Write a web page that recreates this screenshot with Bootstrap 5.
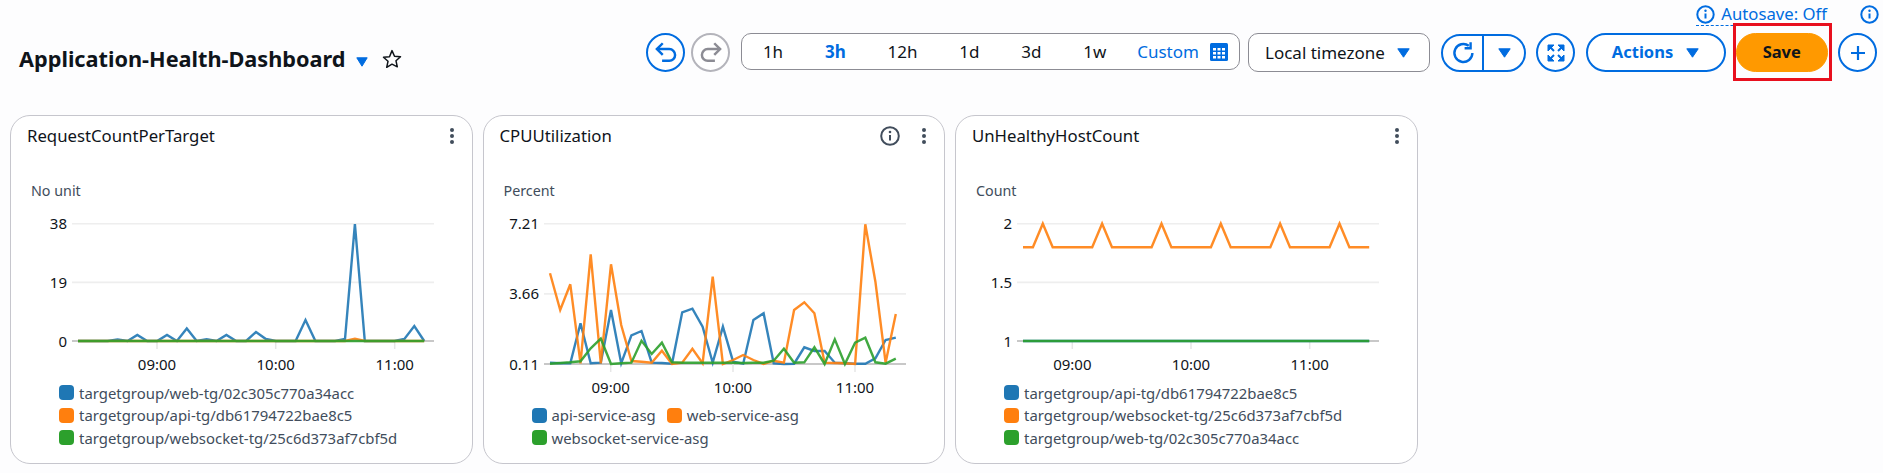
<!DOCTYPE html>
<html lang="en">
<head>
  <meta charset="UTF-8">
  <title>Application-Health-Dashboard</title>
  <meta name="viewport" content="width=device-width, initial-scale=1">
  <link href="https://cdn.jsdelivr.net/npm/bootstrap@5.3.2/dist/css/bootstrap.min.css" rel="stylesheet">
  <style>
    body {
      background-color: #fdfdfe;
      color: #0f141a;
      font-family: "Noto Sans", sans-serif;
      font-size: 14px;
    }
    .autosave-row { height: 33px; padding: 5px 4px 10px 0; }
    .autosave-link {
      color: #006ce0;
      font-size: 16.7px;
      line-height: 18px;
      gap: 6px;
      border-bottom: 1px dashed #006ce0;
      height: 21px;
      margin-right: 33px;
    }
    .toolbar-row { height: 39px; padding: 0 6px 0 19px; margin-bottom: 43px; }
    .dash-title { font-size: 21.7px; font-weight: 700; margin: 13px 0 0; line-height: 28px; }
    .title-tools { margin: 12px auto 0 0; gap: 14px; padding-left: 10px; }
    .title-caret { margin-top: 7px; }
    .undo-btn { margin-right: 6px; }
    .round-btn, .pill-btn {
      --bs-btn-color: #006ce0;
      --bs-btn-border-color: #006ce0;
      --bs-btn-hover-color: #006ce0;
      --bs-btn-hover-border-color: #006ce0;
      --bs-btn-hover-bg: #f0f6ff;
      --bs-btn-border-width: 2px;
      --bs-btn-padding-x: 0;
      --bs-btn-padding-y: 0;
      height: 39px;
      background: #fff;
      display: flex;
      align-items: center;
      justify-content: center;
    }
    .round-btn { width: 39px; border-radius: 50%; }
    .round-btn.is-off { --bs-btn-border-color: #b4b4bb; --bs-btn-color: #8c8c94; }
    .pill-btn { border-radius: 20px; font-weight: 700; font-size: 16.5px; gap: 13px; }
    .actions-btn { width: 140px; margin-left: 10.5px; }
    .range-box {
      height: 37px;
      width: 499px;
      border: 1px solid #8c8c94;
      border-radius: 10px;
      background: #fff;
      margin: 0 8px 2px 11px;
      font-size: 17px;
    }
    .range-item { padding: 0 20.9px; }
    .range-item.is-on { color: #006ce0; font-weight: 700; }
    .range-custom { color: #006ce0; padding-left: 10px; gap: 11px; }
    .tz-select {
      height: 39px;
      width: 182px;
      border: 1px solid #8c8c94;
      border-radius: 10px;
      background: #fff;
      font-size: 17px;
      padding: 0 19px 0 16px;
      margin-right: 11px;
    }
    .refresh-group { width: 85px; height: 38px; border: 2px solid #006ce0; border-radius: 20px; background: #fff; margin-right: 10px; }
    .refresh-main { width: 41px; border-right: 2px solid #006ce0; padding-left: 3px; }
    .save-wrap { margin: 0 10.5px; }
    .save-btn {
      --bs-btn-bg: #ff9900;
      --bs-btn-hover-bg: #ff9900;
      --bs-btn-color: #0f141a;
      --bs-btn-hover-color: #0f141a;
      --bs-btn-border-color: #ff9900;
      --bs-btn-hover-border-color: #ff9900;
      --bs-btn-padding-y: 0;
      width: 91.5px;
      height: 39px;
      border-radius: 20px;
      font-size: 16.5px;
      font-weight: 700;
    }
    .save-mark { top: -10px; bottom: -9px; left: -3px; right: -4px; border: 3px solid #e8101e; pointer-events: none; }
    .panel-list { padding-left: 10px; gap: 10px; }
    .panel {
      width: 462.5px;
      height: 349px;
      border: 1px solid #c6c6cd;
      border-radius: 20px;
      background: #fff;
    }
    .panel-head { height: 40px; padding: 0 17px 0 16px; font-size: 16.75px; }
    .panel-tools { gap: 21px; }
    .panel-unit { color: #414d5c; margin: 25px 0 4px 20px; line-height: 20px; font-size: 14.3px; }
    .panel-chart { display: block; }
    .chart-text { font-family: "Noto Sans", sans-serif; font-size: 15px; fill: #0f141a; }
    .legend-list { margin: auto 0 14px 48px; color: #414d5c; font-size: 14.9px; line-height: 22.5px; column-gap: 11px; }
    .legend-item { gap: 5px; }
    .legend-dot { width: 15px; height: 15px; border-radius: 4px; }
    .dot-blue { background: #1f77b4; }
    .dot-orange { background: #ff7f0e; }
    .dot-green { background: #2ca02c; }
  </style>
</head>
<body>

<!-- top bar -->
<div class="d-flex justify-content-end align-items-start autosave-row">
  <div class="d-flex autosave-link">
    <svg width="19" height="19" viewBox="0 0 19 19"><circle cx="9.5" cy="9.5" r="8.2" fill="none" stroke="#006ce0" stroke-width="2"/><path d="M9.5 8.5v5" stroke="#006ce0" stroke-width="2"/><circle cx="9.5" cy="5.7" r="1.2" fill="#006ce0"/></svg>
    <span>Autosave: Off</span>
  </div>
  <svg width="19" height="19" viewBox="0 0 19 19"><circle cx="9.5" cy="9.5" r="8.2" fill="none" stroke="#006ce0" stroke-width="2"/><path d="M9.5 8.5v5" stroke="#006ce0" stroke-width="2"/><circle cx="9.5" cy="5.7" r="1.2" fill="#006ce0"/></svg>
</div>

<div class="d-flex align-items-center toolbar-row">
  <h1 class="dash-title">Application-Health-Dashboard</h1>
  <div class="d-flex align-items-center title-tools">
    <svg class="title-caret" width="12" height="10" viewBox="0 0 12 10"><path d="M.8.8h10.4L6 9.2z" fill="#006ce0" stroke="#006ce0" stroke-linejoin="round"/></svg>
    <svg width="20" height="20" viewBox="0 0 20 20"><path d="M10 1.6l2.5 5.6 6 .6-4.5 4 1.3 6L10 15.2 4.7 18.3l1.3-6-4.5-4 6-.6z" fill="none" stroke="#0f141a" stroke-width="1.5" stroke-linejoin="round"/></svg>
  </div>

  <button class="btn round-btn undo-btn" type="button" aria-label="Undo">
    <svg width="26" height="26" viewBox="0 0 20 20" fill="none" stroke="currentColor" stroke-width="1.9"><path d="M7.5 2.5L3 7l4.5 4.5"/><path d="M3 7h9.5a4.5 4.5 0 0 1 0 9H7"/></svg>
  </button>
  <button class="btn round-btn is-off" type="button" aria-label="Redo">
    <svg width="26" height="26" viewBox="0 0 20 20" fill="none" stroke="currentColor" stroke-width="1.9"><path d="M12.5 2.5L17 7l-4.5 4.5"/><path d="M17 7H7.5a4.5 4.5 0 0 0 0 9H13"/></svg>
  </button>

  <div class="d-flex align-items-center range-box">
    <span class="range-item">1h</span>
    <span class="range-item is-on">3h</span>
    <span class="range-item">12h</span>
    <span class="range-item">1d</span>
    <span class="range-item">3d</span>
    <span class="range-item">1w</span>
    <span class="d-flex align-items-center range-custom">Custom
      <svg width="18" height="18" viewBox="0 0 18 18"><rect width="18" height="18" rx="1.5" fill="#006ce0"/><g fill="#fff"><rect x="3" y="5" width="3" height="2.5"/><rect x="7.5" y="5" width="3" height="2.5"/><rect x="12" y="5" width="3" height="2.5"/><rect x="3" y="9" width="3" height="2.5"/><rect x="7.5" y="9" width="3" height="2.5"/><rect x="12" y="9" width="3" height="2.5"/><rect x="3" y="13" width="3" height="2.5"/><rect x="7.5" y="13" width="3" height="2.5"/><rect x="12" y="13" width="3" height="2.5"/></g></svg>
    </span>
  </div>

  <div class="d-flex align-items-center justify-content-between tz-select">
    <span>Local timezone</span>
    <svg width="13" height="10" viewBox="0 0 13 10"><path d="M.8.8h11.4L6.5 9.2z" fill="#006ce0" stroke="#006ce0" stroke-linejoin="round"/></svg>
  </div>

  <div class="d-flex refresh-group">
    <div class="d-flex align-items-center justify-content-center refresh-main">
      <svg width="24" height="24" viewBox="0 0 20 20" fill="none" stroke="#006ce0" stroke-width="2"><path d="M17 10a7.5 7.5 0 1 1-3-6"/><path d="M15.5 1v5h-5"/></svg>
    </div>
    <div class="d-flex align-items-center justify-content-center flex-grow-1">
      <svg width="13" height="10" viewBox="0 0 13 10"><path d="M.8.8h11.4L6.5 9.2z" fill="#006ce0" stroke="#006ce0" stroke-linejoin="round"/></svg>
    </div>
  </div>

  <button class="btn round-btn" type="button" aria-label="Full screen">
    <svg width="18" height="18" viewBox="0 0 18 18" fill="none" stroke="#006ce0"><path d="M1 1h6l-6 6zM17 1h-6l6 6zM1 17h6l-6-6zM17 17h-6l6-6z" fill="#006ce0" stroke-width="1"/><path d="M2 2l5 5M16 2l-5 5M2 16l5-5M16 16l-5-5" stroke-width="2"/></svg>
  </button>

  <button class="btn pill-btn actions-btn" type="button">
    Actions
    <svg width="13" height="10" viewBox="0 0 13 10"><path d="M.8.8h11.4L6.5 9.2z" fill="#006ce0" stroke="#006ce0" stroke-linejoin="round"/></svg>
  </button>

  <div class="position-relative save-wrap">
    <button class="btn save-btn" type="button">Save</button>
    <div class="position-absolute save-mark"></div>
  </div>

  <button class="btn round-btn" type="button" aria-label="Add widget">
    <svg width="18" height="18" viewBox="0 0 18 18" stroke="#006ce0" stroke-width="2.2"><path d="M9 2v14M2 9h14"/></svg>
  </button>
</div>

<!-- widgets -->
<div class="d-flex panel-list">
  <div class="d-flex flex-column panel">
    <div class="d-flex align-items-center justify-content-between panel-head">
      <span>RequestCountPerTarget</span>
      <svg width="6" height="18" viewBox="0 0 6 18" fill="#414d5c"><circle cx="3" cy="3" r="2"/><circle cx="3" cy="9" r="2"/><circle cx="3" cy="15" r="2"/></svg>
    </div>
    <div class="panel-unit">No unit</div>
    <svg class="panel-chart" id="chart-requests" width="461" height="170"></svg>
    <ul class="list-unstyled d-flex flex-column legend-list">
      <li class="d-flex align-items-center legend-item"><span class="legend-dot dot-blue"></span>targetgroup/web-tg/02c305c770a34acc</li>
      <li class="d-flex align-items-center legend-item"><span class="legend-dot dot-orange"></span>targetgroup/api-tg/db61794722bae8c5</li>
      <li class="d-flex align-items-center legend-item"><span class="legend-dot dot-green"></span>targetgroup/websocket-tg/25c6d373af7cbf5d</li>
    </ul>
  </div>

  <div class="d-flex flex-column panel">
    <div class="d-flex align-items-center justify-content-between panel-head">
      <span>CPUUtilization</span>
      <div class="d-flex align-items-center panel-tools">
        <svg width="20" height="20" viewBox="0 0 20 20"><circle cx="10" cy="10" r="8.8" fill="none" stroke="#414d5c" stroke-width="2"/><path d="M10 9v5.5" stroke="#414d5c" stroke-width="2"/><circle cx="10" cy="6" r="1.3" fill="#414d5c"/></svg>
        <svg width="6" height="18" viewBox="0 0 6 18" fill="#414d5c"><circle cx="3" cy="3" r="2"/><circle cx="3" cy="9" r="2"/><circle cx="3" cy="15" r="2"/></svg>
      </div>
    </div>
    <div class="panel-unit">Percent</div>
    <svg class="panel-chart" id="chart-cpu" width="461" height="192"></svg>
    <ul class="list-unstyled d-flex flex-wrap legend-list">
      <li class="d-flex align-items-center legend-item"><span class="legend-dot dot-blue"></span>api-service-asg</li>
      <li class="d-flex align-items-center legend-item"><span class="legend-dot dot-orange"></span>web-service-asg</li>
      <li class="d-flex align-items-center legend-item w-100"><span class="legend-dot dot-green"></span>websocket-service-asg</li>
    </ul>
  </div>

  <div class="d-flex flex-column panel">
    <div class="d-flex align-items-center justify-content-between panel-head">
      <span>UnHealthyHostCount</span>
      <svg width="6" height="18" viewBox="0 0 6 18" fill="#414d5c"><circle cx="3" cy="3" r="2"/><circle cx="3" cy="9" r="2"/><circle cx="3" cy="15" r="2"/></svg>
    </div>
    <div class="panel-unit">Count</div>
    <svg class="panel-chart" id="chart-hosts" width="461" height="170"></svg>
    <ul class="list-unstyled d-flex flex-column legend-list">
      <li class="d-flex align-items-center legend-item"><span class="legend-dot dot-blue"></span>targetgroup/api-tg/db61794722bae8c5</li>
      <li class="d-flex align-items-center legend-item"><span class="legend-dot dot-orange"></span>targetgroup/websocket-tg/25c6d373af7cbf5d</li>
      <li class="d-flex align-items-center legend-item"><span class="legend-dot dot-green"></span>targetgroup/web-tg/02c305c770a34acc</li>
    </ul>
  </div>
</div>

<script>
  const BLUE = '#1f77b4', ORANGE = '#ff7f0e', GREEN = '#2ca02c';

  // series values are pixels above the chart baseline
  function spikes(length, points) {
    const out = new Array(length).fill(0);
    Object.keys(points).forEach(i => { out[i] = points[i]; });
    return out;
  }

  function drawChart(id, cfg) {
    let html = '';
    const mid = (cfg.top + cfg.base) / 2;
    [cfg.top, mid].forEach(y => {
      html += `<line x1="${cfg.gridLeft}" x2="${cfg.gridLeft + 362}" y1="${y}" y2="${y}" stroke="#eeeeee" stroke-width="1.6"/>`;
    });
    html += `<line x1="${cfg.gridLeft}" x2="${cfg.gridLeft + 362}" y1="${cfg.base}" y2="${cfg.base}" stroke="#c8c8c8" stroke-width="2"/>`;

    [cfg.top, mid, cfg.base].forEach((y, i) => {
      html += `<text class="chart-text" x="${cfg.gridLeft - 5}" y="${y + 5.5}" text-anchor="end">${cfg.yLabels[i]}</text>`;
    });

    ['09:00', '10:00', '11:00'].forEach((label, i) => {
      const x = cfg.ticks[i];
      html += `<line x1="${x}" x2="${x}" y1="${cfg.base}" y2="${cfg.base + 8}" stroke="#e6e6e6" stroke-width="1.5"/>`;
      html += `<text class="chart-text" x="${x}" y="${cfg.base + 29}" text-anchor="middle">${label}</text>`;
    });

    cfg.series.forEach(s => {
      const pts = s.values.map((v, i) => (cfg.left + i * cfg.step).toFixed(1) + ',' + (cfg.base - v).toFixed(1)).join(' ');
      html += `<polyline points="${pts}" fill="none" stroke="${s.color}" stroke-width="2.4" stroke-opacity="0.9"/>`;
    });

    document.getElementById(id).innerHTML = html;
  }

  drawChart('chart-requests', {
    top: 18.7, base: 136, gridLeft: 61, left: 67, step: 9.89,
    ticks: [146, 264.7, 383.7],
    yLabels: ['38', '19', '0'],
    series: [
      { color: BLUE, values: spikes(36, { 4: 1.5, 6: 6, 9: 6, 11: 12.5, 13: 1.7, 15: 6, 18: 9, 19: 2, 23: 21, 27: 2, 28: 117, 33: 2, 34: 15 }) },
      { color: ORANGE, values: spikes(36, { 28: 2.3 }) },
      { color: GREEN, values: spikes(36, {}) }
    ]
  });

  drawChart('chart-cpu', {
    top: 18.7, base: 159, gridLeft: 60, left: 66, step: 10.17,
    ticks: [126.7, 249, 371],
    yLabels: ['7.21', '3.66', '0.11'],
    series: [
      { color: BLUE, values: [1.3, .7, .7, 40.7, .7, 1.3, 54, .7, 28.7, 33, 1.3, 1, .3, 51.7, 55.3, 37.3, 1.3, 37.3, 2.3, .3, 44, 50.7, .7, 0, .3, 16.7, 13, 13, 1.3, .7, .3, .3, 5.7, 24, 26.3] },
      { color: ORANGE, values: [90.7, 54, 79.7, .7, 109.7, .7, 99.7, 39, 3, 2.3, 1.3, 13.3, 0, 1.3, 15.3, .7, 87.3, 0, 4, 9, 4, 0, 3.3, 1.3, 54, 61.7, 50.7, 1.3, 1, .7, 0, 139.7, 82.3, 1.3, 50] },
      { color: GREEN, values: [.3, 1, 1.7, 2.7, 15.7, 25.3, 0, .7, 1.3, 23.3, 10, 21.3, 1.7, 1.3, 1.3, 1.3, 1.3, 1.3, 1.3, 1, 1.3, 1.3, 3.3, 15.3, 1.3, 1.7, 16.7, 0, 24.7, 0, 21.3, 26.3, 1.7, .3, 5.3] }
    ]
  });

  const hostPeaks = {};
  for (let i = 0; i < 36; i++) hostPeaks[i] = (i - 2) % 6 === 0 ? 117.3 : 93.7;

  drawChart('chart-hosts', {
    top: 18.7, base: 136, gridLeft: 61, left: 67, step: 9.89,
    ticks: [116.3, 235, 353.7],
    yLabels: ['2', '1.5', '1'],
    series: [
      { color: BLUE, values: spikes(36, {}) },
      { color: ORANGE, values: spikes(36, hostPeaks) },
      { color: GREEN, values: spikes(36, {}) }
    ]
  });
</script>

<script src="https://cdn.jsdelivr.net/npm/bootstrap@5.3.2/dist/js/bootstrap.bundle.min.js"></script>
</body>
</html>
